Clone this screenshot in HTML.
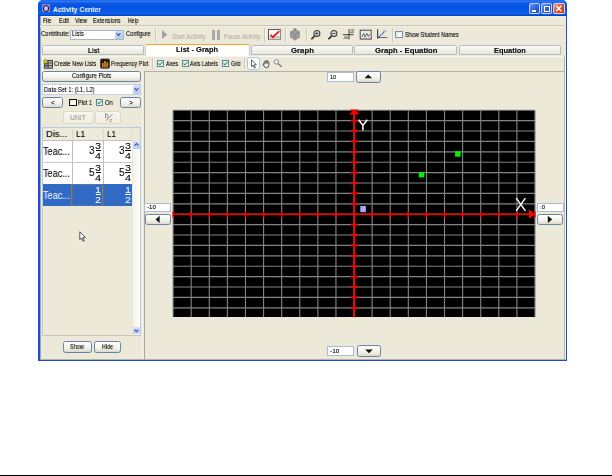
<!DOCTYPE html>
<html><head><meta charset="utf-8">
<style>
*{box-sizing:border-box;margin:0;padding:0}
html,body{width:612px;height:476px;background:#fff;overflow:hidden;font-family:"Liberation Sans",sans-serif;}
.a{position:absolute}
.t{position:absolute;white-space:nowrap;transform-origin:0 0;will-change:transform}
.btn{position:absolute;background:linear-gradient(#ffffff,#f3f2ea 60%,#dddacb);border:1px solid #6a84a8;border-radius:2.5px}
.dbtn{position:absolute;background:linear-gradient(#f7f6f0,#efede3);border:1px solid #dddaca;border-radius:2px}
.wb{position:absolute;top:3px;height:11px;border:1px solid rgba(232,238,252,0.8);border-radius:2px;background:linear-gradient(135deg,#6a98f4,#2a5bdc 60%,#2150c8)}
.sep{position:absolute;width:1px;background:#cbc8b6;box-shadow:1px 0 0 #f6f5ee}
.tab{position:absolute;top:45.1px;height:10.4px;background:linear-gradient(#fbfbf8,#f0eee4 60%,#e9e7da);border:1px solid #b3bcc6;border-radius:1.5px 1.5px 0 0}
.cb{position:absolute;width:7px;height:7px;background:linear-gradient(135deg,#e4e4dc,#fff 65%);border:1px solid #5f83ac}
.inp{position:absolute;background:#fff;border:1px solid #a9bdd6;}
</style></head><body>

<div class="a" style="left:38px;top:0;width:529px;height:360.9px;background:#1b4cd8;border-radius:5px 5px 0 0"></div>
<div class="a" style="left:38px;top:0;width:529px;height:15.9px;border-radius:5px 5px 0 0;background:linear-gradient(#1f62e2 0%,#2c76f2 9%,#0a5ae6 20%,#0553e0 35%,#0553e0 58%,#0a61ee 80%,#0b64f0 88%,#0444c6 97%,#0238b0 100%)"></div>
<div class="a" style="left:40.2px;top:15.9px;width:525.8px;height:343.9px;background:#ece9d8;border-left:1.4px solid #a9a89c;border-bottom:1px solid #b4b2a4"></div>
<div class="a" style="left:41.6px;top:4.2px;width:8.4px;height:8.3px;background:#8f8ad0;border-radius:0.8px"></div>
<div class="a" style="left:42.6px;top:5.1px;width:6.5px;height:6.5px;border-radius:50%;border:1.9px solid #0c1234;background:#c4bef0"></div>
<div class="t" style="left:52.60px;top:5.31px;font-size:7.9px;line-height:9.48px;transform:scaleX(0.8617);color:#fff;font-weight:bold;">Activity Center</div>
<div class="wb" style="left:529px;width:11px"></div><div class="a" style="left:531.5px;top:10px;width:4px;height:1.6px;background:#fff"></div>
<div class="wb" style="left:541px;width:11px"></div><div class="a" style="left:543.5px;top:5.5px;width:6px;height:6px;border:1px solid #fff;border-top-width:1.8px"></div>
<div class="wb" style="left:553px;width:11.5px;background:linear-gradient(135deg,#f09478,#d84a24 55%,#c23a18)"></div>
<svg class="a" style="left:553px;top:3px" width="12" height="11"><path d="M3.3 2.8 L8.4 8.2 M8.4 2.8 L3.3 8.2" stroke="#fff" stroke-width="1.5"/></svg>
<div class="t" style="left:43.00px;top:16.78px;font-size:6.7px;line-height:8.04px;transform:scaleX(0.7791);color:#0a0a0a;text-shadow:0 0 0.5px rgba(0,0,0,0.4);">File</div>
<div class="t" style="left:58.80px;top:16.78px;font-size:6.7px;line-height:8.04px;transform:scaleX(0.8585);color:#0a0a0a;text-shadow:0 0 0.5px rgba(0,0,0,0.4);">Edit</div>
<div class="t" style="left:75.00px;top:16.78px;font-size:6.7px;line-height:8.04px;transform:scaleX(0.8348);color:#0a0a0a;text-shadow:0 0 0.5px rgba(0,0,0,0.4);">View</div>
<div class="t" style="left:93.30px;top:16.78px;font-size:6.7px;line-height:8.04px;transform:scaleX(0.8466);color:#0a0a0a;text-shadow:0 0 0.5px rgba(0,0,0,0.4);">Extensions</div>
<div class="t" style="left:128.00px;top:16.78px;font-size:6.7px;line-height:8.04px;transform:scaleX(0.7628);color:#0a0a0a;text-shadow:0 0 0.5px rgba(0,0,0,0.4);">Help</div>
<div class="a" style="left:40.3px;top:25.3px;width:524px;height:1px;background:#c9c6b5"></div><div class="a" style="left:41.6px;top:15.9px;width:524.4px;height:1px;background:#f5f0dc"></div>
<div class="a" style="left:40.3px;top:26.4px;width:524px;height:1px;background:#f3f1e6"></div>
<div class="t" style="left:40.50px;top:30.48px;font-size:6.7px;line-height:8.04px;transform:scaleX(0.8772);color:#0a0a0a;text-shadow:0 0 0.5px rgba(0,0,0,0.4);">Contribute:</div>
<div class="inp" style="left:69.8px;top:29.5px;width:53.8px;height:10.4px;border-color:#a3b6ce"></div>
<div class="t" style="left:71.80px;top:30.48px;font-size:6.7px;line-height:8.04px;transform:scaleX(0.8572);color:#0a0a0a;text-shadow:0 0 0.5px rgba(0,0,0,0.4);">Lists</div>
<div class="a" style="left:115.2px;top:30.5px;width:7.4px;height:8.4px;background:linear-gradient(#cfdcfb,#b4c8f6);border-radius:1px"></div>
<svg class="a" style="left:115.4px;top:30.4px" width="7" height="9"><path d="M1.6 3.2 L3.5 5.6 L5.4 3.2" stroke="#3a5590" stroke-width="1.1" fill="none"/></svg>
<div class="t" style="left:126.20px;top:30.48px;font-size:6.7px;line-height:8.04px;transform:scaleX(0.8483);color:#0a0a0a;text-shadow:0 0 0.5px rgba(0,0,0,0.4);">Configure</div>
<div class="sep" style="left:155.3px;top:28px;height:14px"></div>
<svg class="a" style="left:161px;top:29px" width="8" height="11"><path d="M1 1 L6.3 5.6 L1 10.2 Z" fill="#a3a3a3"/></svg>
<div class="t" style="left:172.40px;top:32.50px;font-size:6.5px;line-height:7.80px;transform:scaleX(0.9339);color:#aaa796;">Start Activity</div>
<div class="a" style="left:212px;top:29.5px;width:2.8px;height:10.2px;background:#a9a9a9"></div><div class="a" style="left:216.8px;top:29.5px;width:2.8px;height:10.2px;background:#a9a9a9"></div>
<div class="t" style="left:223.60px;top:32.50px;font-size:6.5px;line-height:7.80px;transform:scaleX(0.8970);color:#aaa796;">Pause Activity</div>
<div class="sep" style="left:264.4px;top:28px;height:14px"></div>
<div class="a" style="left:268px;top:29.4px;width:13px;height:10.4px;background:linear-gradient(#fafafa 0%,#f4f4f4 62%,#c4c4c4 66%,#d4d4d4 100%);border:1px solid #5a5a5a;border-right-color:#8a8a8a;border-bottom-color:#9a9a9a"></div>
<svg class="a" style="left:268px;top:29.4px" width="13" height="11"><path d="M2.6 5.8 L4.8 8.2 L11.3 2.2" stroke="#e81010" stroke-width="1.7" fill="none"/></svg>
<div class="sep" style="left:285.4px;top:28px;height:14px"></div>
<svg class="a" style="left:289px;top:28px" width="12" height="13"><path d="M6 0.8 L11 3.8 L11 9.6 L6 12.5 L1 9.6 L1 3.8 Z" fill="#9c9c9c"/><path d="M6 6.6 L11 3.8 M6 6.6 L1 3.8 M6 6.6 L6 12.5" stroke="#848484" stroke-width="0.7"/><rect x="4.6" y="0.3" width="2.8" height="2.5" fill="#8c8c8c"/></svg>
<div class="sep" style="left:305.6px;top:28px;height:14px"></div>
<svg class="a" style="left:310px;top:29px" width="12" height="12"><circle cx="6.9" cy="4.5" r="3" fill="#d6d6d6" stroke="#3a3a3a" stroke-width="1.05"/><path d="M4.6 6.9 L1.4 10.3" stroke="#222" stroke-width="1.5"/><path d="M5.2 4.6 H8.4 M6.8 3 V6.2" stroke="#333" stroke-width="0.8"/></svg>
<svg class="a" style="left:326.5px;top:29px" width="12" height="12"><circle cx="6.9" cy="4.5" r="3" fill="#d6d6d6" stroke="#3a3a3a" stroke-width="1.05"/><path d="M4.6 6.9 L1.4 10.3" stroke="#222" stroke-width="1.5"/><path d="M5.2 4.6 H8.4 " stroke="#333" stroke-width="0.8"/></svg>
<svg class="a" style="left:342px;top:28px" width="14" height="13"><path d="M0.8 6.7 H11.6 M7 1.2 V11.4" stroke="#2a2a2a" stroke-width="0.9"/><text x="8" y="5.2" font-size="4.6" font-family="Liberation Sans" fill="#111" textLength="4" lengthAdjust="spacingAndGlyphs">10</text><text x="1.6" y="11" font-size="4.4" font-family="Liberation Sans" fill="#111" textLength="4.6" lengthAdjust="spacingAndGlyphs">40</text></svg>
<svg class="a" style="left:358.5px;top:29px" width="14" height="12"><rect x="1.2" y="1.2" width="11" height="8.8" fill="#ececea" stroke="#4a4a4a" stroke-width="1"/><path d="M1.2 10.4 H12.4" stroke="#888" stroke-width="0.8"/><path d="M3 8 L4.6 4.2 L6.2 8.2 L7.8 4.4 L9.4 7.6 L10.6 5" stroke="#444" stroke-width="0.8" fill="none"/></svg>
<svg class="a" style="left:376px;top:28px" width="13" height="13"><path d="M1.7 1.2 V10.8" stroke="#2a2a2a" stroke-width="1"/><path d="M1 9.5 H11.2" stroke="#555" stroke-width="0.9"/><path d="M2.6 9 L4.4 7.2 L6.2 6.2 L7.6 4.2 L9.6 2.6" stroke="#2a48d8" stroke-width="1.2" fill="none" stroke-dasharray="1.4 0.7"/></svg>
<div class="sep" style="left:392px;top:28px;height:14px"></div>
<div class="cb" style="left:395.2px;top:31.2px;width:7.5px;height:7.2px;border-color:#7890b0;background:linear-gradient(135deg,#dcdcd4,#fff 70%)"></div>
<div class="t" style="left:404.60px;top:30.90px;font-size:6.5px;line-height:7.80px;transform:scaleX(0.8557);color:#0a0a0a;text-shadow:0 0 0.5px rgba(0,0,0,0.4);">Show Student Names</div>

<div class="tab" style="left:41.8px;width:102.6px"></div>
<div class="t" style="left:88.00px;top:46.58px;font-size:7.2px;line-height:8.64px;transform:scaleX(0.8841);color:#111;text-shadow:0 0 0.5px rgba(0,0,0,0.4);font-weight:bold;">List</div>
<div class="tab" style="left:251px;width:102px"></div>
<div class="t" style="left:290.60px;top:46.58px;font-size:7.2px;line-height:8.64px;transform:scaleX(1.0863);color:#111;text-shadow:0 0 0.5px rgba(0,0,0,0.4);font-weight:bold;">Graph</div>
<div class="tab" style="left:354.4px;width:102.4px"></div>
<div class="t" style="left:374.50px;top:46.58px;font-size:7.2px;line-height:8.64px;transform:scaleX(1.0721);color:#111;text-shadow:0 0 0.5px rgba(0,0,0,0.4);font-weight:bold;">Graph - Equation</div>
<div class="tab" style="left:458.6px;width:102.8px"></div>
<div class="t" style="left:494.00px;top:46.58px;font-size:7.2px;line-height:8.64px;transform:scaleX(1.0374);color:#111;text-shadow:0 0 0.5px rgba(0,0,0,0.4);font-weight:bold;">Equation</div>
<div class="tab" style="left:144.8px;top:43.9px;width:105.6px;height:12.8px;background:#fefefd;border:1px solid #c4c8cc;border-bottom:none;border-top:1.4px solid #f2a32a"></div>
<div class="t" style="left:175.80px;top:45.88px;font-size:7.2px;line-height:8.64px;transform:scaleX(1.0460);color:#111;text-shadow:0 0 0.5px rgba(0,0,0,0.4);font-weight:bold;">List - Graph</div>
<div class="a" style="left:41.6px;top:55.9px;width:522.4px;height:1px;background:#f7f6f0"></div>
<svg class="a" style="left:43px;top:57.5px" width="10" height="11"><rect x="1.4" y="2.4" width="8" height="7.8" fill="#b9b9b9" stroke="#2a2a2a" stroke-width="0.9"/><rect x="1.9" y="2.9" width="3" height="6.8" fill="#8a8a8a"/><path d="M5.2 2.4 V10.2 M1.4 5 H9.4 M1.4 7.6 H9.4" stroke="#2a2a2a" stroke-width="0.7"/><path d="M2.5 0.9 L3.3 2.4 L4.9 2.7 L3.7 3.9 L4 5.5 L2.5 4.7 L1 5.5 L1.3 3.9 L0.1 2.7 L1.7 2.4 Z" fill="#f4e818" stroke="#6a6208" stroke-width="0.4"/></svg>
<div class="t" style="left:54.20px;top:59.74px;font-size:6.6px;line-height:7.92px;transform:scaleX(0.8403);color:#0a0a0a;text-shadow:0 0 0.5px rgba(0,0,0,0.4);">Create New Lists</div>
<svg class="a" style="left:99.8px;top:57.8px" width="10" height="11"><rect x="0.6" y="1" width="8.8" height="9.2" rx="1" fill="#2c1a08" stroke="#111" stroke-width="0.6"/><rect x="2" y="5" width="1.6" height="4.6" fill="#d08a2c"/><rect x="4.2" y="3" width="1.6" height="6.6" fill="#d08a2c"/><rect x="6.4" y="4.4" width="1.6" height="5.2" fill="#d08a2c"/></svg>
<div class="t" style="left:110.90px;top:59.74px;font-size:6.6px;line-height:7.92px;transform:scaleX(0.8409);color:#0a0a0a;text-shadow:0 0 0.5px rgba(0,0,0,0.4);">Frequency Plot</div>
<div class="sep" style="left:152.2px;top:58px;height:11px"></div>
<div class="cb" style="left:157.3px;top:60px"></div><svg class="a" style="left:157.3px;top:60px" width="7" height="7"><path d="M1.6 3.4 L3 5 L5.5 1.9" stroke="#21a121" stroke-width="1.1" fill="none"/></svg>
<div class="t" style="left:165.60px;top:59.74px;font-size:6.6px;line-height:7.92px;transform:scaleX(0.8315);color:#0a0a0a;text-shadow:0 0 0.5px rgba(0,0,0,0.4);">Axes</div>
<div class="cb" style="left:181.6px;top:60px"></div><svg class="a" style="left:181.6px;top:60px" width="7" height="7"><path d="M1.6 3.4 L3 5 L5.5 1.9" stroke="#21a121" stroke-width="1.1" fill="none"/></svg>
<div class="t" style="left:190.10px;top:59.74px;font-size:6.6px;line-height:7.92px;transform:scaleX(0.8270);color:#0a0a0a;text-shadow:0 0 0.5px rgba(0,0,0,0.4);">Axis Labels</div>
<div class="cb" style="left:222px;top:60px"></div><svg class="a" style="left:222px;top:60px" width="7" height="7"><path d="M1.6 3.4 L3 5 L5.5 1.9" stroke="#21a121" stroke-width="1.1" fill="none"/></svg>
<div class="t" style="left:231.40px;top:59.74px;font-size:6.6px;line-height:7.92px;transform:scaleX(0.7779);color:#0a0a0a;text-shadow:0 0 0.5px rgba(0,0,0,0.4);">Grid</div>
<div class="sep" style="left:244.2px;top:58px;height:11px"></div>
<div class="a" style="left:247.4px;top:57.4px;width:12.6px;height:12.3px;background:#fdfdfc;border:1.2px solid #aec2da;border-radius:2.5px"></div>
<svg class="a" style="left:250.2px;top:58.6px" width="8" height="10"><path d="M1.5 0.8 L1.5 7.6 L3.1 6.2 L4.3 9 L5.3 8.5 L4.2 5.8 L6.3 5.6 Z" fill="#fff" stroke="#222" stroke-width="0.7"/></svg>
<svg class="a" style="left:261.8px;top:58.6px" width="9" height="10"><path d="M2.2 5.4 V3 Q2.8 2.2 3.3 3 V2 Q3.9 1.2 4.5 2 V1.8 Q5.1 1 5.7 1.9 V2.8 Q6.3 2.2 6.8 3 V6.4 Q6.6 8.6 4.6 8.8 Q2.8 8.8 1.8 6.8 L0.9 5.2 Q1.4 4.4 2.2 5.4 Z" fill="#f4f4f0" stroke="#2a2a2a" stroke-width="0.8"/><path d="M3.3 3 V5 M4.5 2 V5 M5.7 2.6 V5" stroke="#2a2a2a" stroke-width="0.5"/></svg>
<svg class="a" style="left:273px;top:58.2px" width="10" height="10"><circle cx="3.4" cy="3.9" r="2.2" fill="#f4f4f2" stroke="#7c7c7c" stroke-width="0.9"/><path d="M5.1 5.6 L8.6 8.7" stroke="#6c6c6c" stroke-width="1.2"/></svg>
<div class="a" style="left:143.8px;top:70.6px;width:421px;height:1px;background:#b4b2a4"></div>
<div class="a" style="left:143.8px;top:70.5px;width:1px;height:288.5px;background:#a9a79a"></div>
<div class="a" style="left:141.8px;top:70.5px;width:1.2px;height:288.5px;background:#f7f6ef"></div>
<div class="a" style="left:563.9px;top:56px;width:1px;height:303px;background:#b9b7a8"></div><div class="a" style="left:564.9px;top:56px;width:1.1px;height:303px;background:#f6f5ee"></div>
<div class="btn" style="left:42.1px;top:71.3px;width:98.7px;height:10.4px"></div>
<div class="t" style="left:72.30px;top:72.24px;font-size:6.6px;line-height:7.92px;transform:scaleX(0.8693);color:#0a0a0a;text-shadow:0 0 0.5px rgba(0,0,0,0.4);">Configure Plots</div>
<div class="inp" style="left:42.1px;top:84.2px;width:98.8px;height:10.8px;border-color:#c3d0e2"></div>
<div class="t" style="left:43.50px;top:85.64px;font-size:6.6px;line-height:7.92px;transform:scaleX(0.8810);color:#0a0a0a;text-shadow:0 0 0.5px rgba(0,0,0,0.4);">Data Set 1: (L1, L2)</div>
<div class="a" style="left:133px;top:85.4px;width:7px;height:8.4px;background:linear-gradient(#d2defb,#b8cbf6);border-radius:1px"></div><svg class="a" style="left:133px;top:85.4px" width="7" height="9"><path d="M1.7 3.2 L3.5 5.4 L5.3 3.2" stroke="#3a5590" stroke-width="1.1" fill="none"/></svg>
<div class="btn" style="left:42.2px;top:97.3px;width:21.2px;height:10.9px"></div>
<div class="t" style="left:51.00px;top:98.68px;font-size:6.7px;line-height:8.04px;transform:scaleX(1.0240);color:#0a0a0a;text-shadow:0 0 0.5px rgba(0,0,0,0.4);">&lt;</div>
<div class="btn" style="left:120.2px;top:97.3px;width:20.6px;height:10.9px"></div>
<div class="t" style="left:128.50px;top:98.68px;font-size:6.7px;line-height:8.04px;transform:scaleX(1.0240);color:#0a0a0a;text-shadow:0 0 0.5px rgba(0,0,0,0.4);">&gt;</div>
<div class="cb" style="left:69px;top:99px;border:1.5px solid #111;width:7.5px;height:7.3px"></div>
<div class="t" style="left:77.60px;top:98.64px;font-size:6.6px;line-height:7.92px;transform:scaleX(0.8237);color:#0a0a0a;text-shadow:0 0 0.5px rgba(0,0,0,0.4);">Plot 1</div>
<div class="cb" style="left:95.8px;top:99px"></div><svg class="a" style="left:95.8px;top:99px" width="7" height="7"><path d="M1.6 3.4 L3 5 L5.5 1.9" stroke="#21a121" stroke-width="1.1" fill="none"/></svg>
<div class="t" style="left:105.00px;top:98.64px;font-size:6.6px;line-height:7.92px;transform:scaleX(0.8526);color:#0a0a0a;text-shadow:0 0 0.5px rgba(0,0,0,0.4);">On</div>
<div class="dbtn" style="left:62.5px;top:111.2px;width:31px;height:12.4px"></div>
<div class="t" style="left:69.80px;top:112.82px;font-size:7.8px;line-height:9.36px;transform:scaleX(0.8625);color:#8e8b7d;">UNIT</div>
<div class="dbtn" style="left:95.4px;top:111.2px;width:26px;height:12.4px"></div>
<svg class="a" style="left:103px;top:112px" width="12" height="11"><path d="M2.8 8.8 L9.6 2.2" stroke="#6f6d62" stroke-width="0.8"/><text x="1.7" y="6.3" font-size="7" font-family="Liberation Sans" fill="#6f6d62">b</text><text x="6.6" y="9.6" font-size="5.2" font-family="Liberation Sans" fill="#6f6d62">c</text></svg>
<div class="a" style="left:42.3px;top:126.6px;width:98.6px;height:209px;border:1px solid #b9cbe2;border-bottom:1px solid #c8c5b4"></div>
<div class="a" style="left:43.3px;top:127.6px;width:89px;height:13px;background:#ebeadb;border-bottom:1px solid #c5c2b0"></div>
<div class="a" style="left:71.5px;top:129px;width:1px;height:10px;background:#dcd9c9"></div>
<div class="a" style="left:102.5px;top:129px;width:1px;height:10px;background:#dcd9c9"></div>
<div class="a" style="left:131px;top:129px;width:1px;height:10px;background:#dcd9c9"></div>
<div class="t" style="left:45.80px;top:128.14px;font-size:9.6px;line-height:11.52px;transform:scaleX(0.9790);color:#111;text-shadow:0 0 0.5px rgba(0,0,0,0.4);">Dis...</div>
<div class="t" style="left:76.00px;top:128.14px;font-size:9.6px;line-height:11.52px;transform:scaleX(0.8621);color:#111;text-shadow:0 0 0.5px rgba(0,0,0,0.4);">L1</div>
<div class="t" style="left:106.50px;top:128.14px;font-size:9.6px;line-height:11.52px;transform:scaleX(0.8433);color:#111;text-shadow:0 0 0.5px rgba(0,0,0,0.4);">L1</div>
<div class="a" style="left:43.3px;top:140.6px;width:88.7px;height:21.9px;background:#fff"></div>
<div class="a" style="left:43.3px;top:161.7px;width:88.7px;height:1px;background:#c8c8c8"></div>
<div class="a" style="left:71.5px;top:140.6px;width:1px;height:21.9px;background:#c0c0c0"></div>
<div class="a" style="left:102.5px;top:140.6px;width:1px;height:21.9px;background:#c0c0c0"></div>
<div class="t" style="left:43.20px;top:145.78px;font-size:10.2px;line-height:12.24px;transform:scaleX(0.8995);color:#111;text-shadow:0 0 0.5px rgba(0,0,0,0.4);">Teac...</div>
<div class="t" style="left:88.90px;top:144.88px;font-size:10.2px;line-height:12.24px;transform:scaleX(0.9697);color:#111;text-shadow:0 0 0.5px rgba(0,0,0,0.4);">3</div>
<div class="t" style="left:95.30px;top:140.98px;font-size:9.2px;line-height:11.04px;transform:scaleX(1.1707);color:#111;text-shadow:0 0 0.5px rgba(0,0,0,0.4);">3</div>
<div class="a" style="left:95.6px;top:150.3px;width:5.9px;height:1px;background:#111"></div>
<div class="t" style="left:95.30px;top:151.18px;font-size:9.2px;line-height:11.04px;transform:scaleX(1.1707);color:#111;text-shadow:0 0 0.5px rgba(0,0,0,0.4);">4</div>
<div class="t" style="left:118.60px;top:144.88px;font-size:10.2px;line-height:12.24px;transform:scaleX(0.9697);color:#111;text-shadow:0 0 0.5px rgba(0,0,0,0.4);">3</div>
<div class="t" style="left:125.00px;top:140.98px;font-size:9.2px;line-height:11.04px;transform:scaleX(1.1707);color:#111;text-shadow:0 0 0.5px rgba(0,0,0,0.4);">3</div>
<div class="a" style="left:125.3px;top:150.3px;width:5.9px;height:1px;background:#111"></div>
<div class="t" style="left:125.00px;top:151.18px;font-size:9.2px;line-height:11.04px;transform:scaleX(1.1707);color:#111;text-shadow:0 0 0.5px rgba(0,0,0,0.4);">4</div>
<div class="a" style="left:43.3px;top:162.5px;width:88.7px;height:21.9px;background:#fff"></div>
<div class="a" style="left:43.3px;top:183.6px;width:88.7px;height:1px;background:#c8c8c8"></div>
<div class="a" style="left:71.5px;top:162.5px;width:1px;height:21.9px;background:#c0c0c0"></div>
<div class="a" style="left:102.5px;top:162.5px;width:1px;height:21.9px;background:#c0c0c0"></div>
<div class="t" style="left:43.20px;top:167.68px;font-size:10.2px;line-height:12.24px;transform:scaleX(0.8995);color:#111;text-shadow:0 0 0.5px rgba(0,0,0,0.4);">Teac...</div>
<div class="t" style="left:88.90px;top:166.78px;font-size:10.2px;line-height:12.24px;transform:scaleX(0.9697);color:#111;text-shadow:0 0 0.5px rgba(0,0,0,0.4);">5</div>
<div class="t" style="left:95.30px;top:162.88px;font-size:9.2px;line-height:11.04px;transform:scaleX(1.1707);color:#111;text-shadow:0 0 0.5px rgba(0,0,0,0.4);">3</div>
<div class="a" style="left:95.6px;top:172.2px;width:5.9px;height:1px;background:#111"></div>
<div class="t" style="left:95.30px;top:173.08px;font-size:9.2px;line-height:11.04px;transform:scaleX(1.1707);color:#111;text-shadow:0 0 0.5px rgba(0,0,0,0.4);">4</div>
<div class="t" style="left:118.60px;top:166.78px;font-size:10.2px;line-height:12.24px;transform:scaleX(0.9697);color:#111;text-shadow:0 0 0.5px rgba(0,0,0,0.4);">5</div>
<div class="t" style="left:125.00px;top:162.88px;font-size:9.2px;line-height:11.04px;transform:scaleX(1.1707);color:#111;text-shadow:0 0 0.5px rgba(0,0,0,0.4);">3</div>
<div class="a" style="left:125.3px;top:172.2px;width:5.9px;height:1px;background:#111"></div>
<div class="t" style="left:125.00px;top:173.08px;font-size:9.2px;line-height:11.04px;transform:scaleX(1.1707);color:#111;text-shadow:0 0 0.5px rgba(0,0,0,0.4);">4</div>
<div class="a" style="left:43.3px;top:184.4px;width:88.7px;height:21.4px;background:#316ac5"></div>
<div class="a" style="left:43.3px;top:205.0px;width:88.7px;height:1px;background:#316ac5"></div>
<div class="a" style="left:71.5px;top:184.4px;width:1px;height:21.4px;background:#6a6a6a"></div>
<div class="a" style="left:102.5px;top:184.4px;width:1px;height:21.4px;background:#6a6a6a"></div>
<div class="t" style="left:43.20px;top:189.58px;font-size:10.2px;line-height:12.24px;transform:scaleX(0.8995);color:#fff;">Teac...</div>
<div class="t" style="left:95.30px;top:184.78px;font-size:9.2px;line-height:11.04px;transform:scaleX(1.1707);color:#fff;">1</div>
<div class="a" style="left:95.6px;top:194.1px;width:5.9px;height:1px;background:#fff"></div>
<div class="t" style="left:95.30px;top:194.98px;font-size:9.2px;line-height:11.04px;transform:scaleX(1.1707);color:#fff;">2</div>
<div class="t" style="left:125.00px;top:184.78px;font-size:9.2px;line-height:11.04px;transform:scaleX(1.1707);color:#fff;">1</div>
<div class="a" style="left:125.3px;top:194.1px;width:5.9px;height:1px;background:#fff"></div>
<div class="t" style="left:125.00px;top:194.98px;font-size:9.2px;line-height:11.04px;transform:scaleX(1.1707);color:#fff;">2</div>
<div class="a" style="left:71.4px;top:184.4px;width:31.4px;height:21.6px;border:1px solid rgba(133,131,111,0.75);border-top-color:rgba(133,131,111,0.45);border-bottom-color:rgba(133,131,111,0.3)"></div>
<div class="a" style="left:132.6px;top:140.6px;width:7.4px;height:194px;background:linear-gradient(90deg,#f3f1ea,#fefefb)"></div>
<div class="a" style="left:133px;top:141.4px;width:6.6px;height:7.4px;background:linear-gradient(#d6e0fc,#b9ccf7);border-radius:1px"></div>
<svg class="a" style="left:133px;top:141.4px" width="7" height="7"><path d="M1.6 4.6 L3.5 2.6 L5.4 4.6" stroke="#3a5590" stroke-width="1.1" fill="none"/></svg>
<div class="a" style="left:133px;top:327px;width:6.6px;height:7.4px;background:linear-gradient(#d6e0fc,#b9ccf7);border-radius:1px"></div>
<svg class="a" style="left:133px;top:327px" width="7" height="7"><path d="M1.6 2.6 L3.5 4.6 L5.4 2.6" stroke="#3a5590" stroke-width="1.1" fill="none"/></svg>
<div class="btn" style="left:63.2px;top:341.2px;width:29.2px;height:11.6px"></div>
<div class="t" style="left:70.30px;top:343.24px;font-size:6.6px;line-height:7.92px;transform:scaleX(0.8424);color:#0a0a0a;text-shadow:0 0 0.5px rgba(0,0,0,0.4);">Show</div>
<div class="btn" style="left:94px;top:341.2px;width:26.8px;height:11.6px"></div>
<div class="t" style="left:101.90px;top:343.24px;font-size:6.6px;line-height:7.92px;transform:scaleX(0.8111);color:#0a0a0a;text-shadow:0 0 0.5px rgba(0,0,0,0.4);">Hide</div>
<svg class="a" style="left:78.6px;top:230.6px" width="8" height="12"><path d="M0.8 0.8 L0.8 8.6 L2.6 7 L4 10.2 L5.2 9.7 L3.9 6.6 L6.3 6.4 Z" fill="#fff" stroke="#111" stroke-width="0.7"/></svg>
<div class="a" style="left:173.1px;top:110.2px;width:361.9px;height:207.0px;background:#000"></div>
<svg class="a" style="left:0;top:0" width="612" height="476"><line x1="173.10" y1="110.2" x2="173.10" y2="317.2" stroke="#858585" stroke-width="1.1"/><line x1="191.19" y1="110.2" x2="191.19" y2="317.2" stroke="#858585" stroke-width="1.1"/><line x1="209.29" y1="110.2" x2="209.29" y2="317.2" stroke="#858585" stroke-width="1.1"/><line x1="227.38" y1="110.2" x2="227.38" y2="317.2" stroke="#858585" stroke-width="1.1"/><line x1="245.48" y1="110.2" x2="245.48" y2="317.2" stroke="#858585" stroke-width="1.1"/><line x1="263.57" y1="110.2" x2="263.57" y2="317.2" stroke="#858585" stroke-width="1.1"/><line x1="281.67" y1="110.2" x2="281.67" y2="317.2" stroke="#858585" stroke-width="1.1"/><line x1="299.76" y1="110.2" x2="299.76" y2="317.2" stroke="#858585" stroke-width="1.1"/><line x1="317.86" y1="110.2" x2="317.86" y2="317.2" stroke="#858585" stroke-width="1.1"/><line x1="335.95" y1="110.2" x2="335.95" y2="317.2" stroke="#858585" stroke-width="1.1"/><line x1="354.05" y1="110.2" x2="354.05" y2="317.2" stroke="#858585" stroke-width="1.1"/><line x1="372.14" y1="110.2" x2="372.14" y2="317.2" stroke="#858585" stroke-width="1.1"/><line x1="390.24" y1="110.2" x2="390.24" y2="317.2" stroke="#858585" stroke-width="1.1"/><line x1="408.33" y1="110.2" x2="408.33" y2="317.2" stroke="#858585" stroke-width="1.1"/><line x1="426.43" y1="110.2" x2="426.43" y2="317.2" stroke="#858585" stroke-width="1.1"/><line x1="444.52" y1="110.2" x2="444.52" y2="317.2" stroke="#858585" stroke-width="1.1"/><line x1="462.62" y1="110.2" x2="462.62" y2="317.2" stroke="#858585" stroke-width="1.1"/><line x1="480.72" y1="110.2" x2="480.72" y2="317.2" stroke="#858585" stroke-width="1.1"/><line x1="498.81" y1="110.2" x2="498.81" y2="317.2" stroke="#858585" stroke-width="1.1"/><line x1="516.90" y1="110.2" x2="516.90" y2="317.2" stroke="#858585" stroke-width="1.1"/><line x1="535.00" y1="110.2" x2="535.00" y2="317.2" stroke="#858585" stroke-width="1.1"/><line x1="173.1" y1="110.20" x2="535" y2="110.20" stroke="#838383" stroke-width="1.15"/><line x1="173.1" y1="120.60" x2="535" y2="120.60" stroke="#838383" stroke-width="1.15"/><line x1="173.1" y1="131.00" x2="535" y2="131.00" stroke="#838383" stroke-width="1.15"/><line x1="173.1" y1="141.40" x2="535" y2="141.40" stroke="#838383" stroke-width="1.15"/><line x1="173.1" y1="151.80" x2="535" y2="151.80" stroke="#838383" stroke-width="1.15"/><line x1="173.1" y1="162.20" x2="535" y2="162.20" stroke="#838383" stroke-width="1.15"/><line x1="173.1" y1="172.60" x2="535" y2="172.60" stroke="#838383" stroke-width="1.15"/><line x1="173.1" y1="183.00" x2="535" y2="183.00" stroke="#838383" stroke-width="1.15"/><line x1="173.1" y1="193.40" x2="535" y2="193.40" stroke="#838383" stroke-width="1.15"/><line x1="173.1" y1="203.80" x2="535" y2="203.80" stroke="#838383" stroke-width="1.15"/><line x1="173.1" y1="214.20" x2="535" y2="214.20" stroke="#838383" stroke-width="1.15"/><line x1="173.1" y1="224.60" x2="535" y2="224.60" stroke="#838383" stroke-width="1.15"/><line x1="173.1" y1="235.00" x2="535" y2="235.00" stroke="#838383" stroke-width="1.15"/><line x1="173.1" y1="245.40" x2="535" y2="245.40" stroke="#838383" stroke-width="1.15"/><line x1="173.1" y1="255.80" x2="535" y2="255.80" stroke="#838383" stroke-width="1.15"/><line x1="173.1" y1="266.20" x2="535" y2="266.20" stroke="#838383" stroke-width="1.15"/><line x1="173.1" y1="276.60" x2="535" y2="276.60" stroke="#838383" stroke-width="1.15"/><line x1="173.1" y1="287.00" x2="535" y2="287.00" stroke="#838383" stroke-width="1.15"/><line x1="173.1" y1="297.40" x2="535" y2="297.40" stroke="#838383" stroke-width="1.15"/><line x1="173.1" y1="307.80" x2="535" y2="307.80" stroke="#838383" stroke-width="1.15"/><line x1="173.1" y1="214.20" x2="533" y2="214.20" stroke="#ff0000" stroke-width="1.6"/><line x1="354.25" y1="112.2" x2="354.25" y2="317.2" stroke="#ff0000" stroke-width="1.7"/><line x1="173.10" y1="211.60" x2="173.10" y2="217.40" stroke="#ff0000" stroke-width="1.5"/><line x1="350.45" y1="110.20" x2="358.25" y2="110.20" stroke="#ff0000" stroke-width="1.5"/><line x1="191.19" y1="211.60" x2="191.19" y2="217.40" stroke="#ff0000" stroke-width="1.5"/><line x1="350.45" y1="120.60" x2="358.25" y2="120.60" stroke="#ff0000" stroke-width="1.5"/><line x1="209.29" y1="211.60" x2="209.29" y2="217.40" stroke="#ff0000" stroke-width="1.5"/><line x1="350.45" y1="131.00" x2="358.25" y2="131.00" stroke="#ff0000" stroke-width="1.5"/><line x1="227.38" y1="211.60" x2="227.38" y2="217.40" stroke="#ff0000" stroke-width="1.5"/><line x1="350.45" y1="141.40" x2="358.25" y2="141.40" stroke="#ff0000" stroke-width="1.5"/><line x1="245.48" y1="211.60" x2="245.48" y2="217.40" stroke="#ff0000" stroke-width="1.5"/><line x1="350.45" y1="151.80" x2="358.25" y2="151.80" stroke="#ff0000" stroke-width="1.5"/><line x1="263.57" y1="211.60" x2="263.57" y2="217.40" stroke="#ff0000" stroke-width="1.5"/><line x1="350.45" y1="162.20" x2="358.25" y2="162.20" stroke="#ff0000" stroke-width="1.5"/><line x1="281.67" y1="211.60" x2="281.67" y2="217.40" stroke="#ff0000" stroke-width="1.5"/><line x1="350.45" y1="172.60" x2="358.25" y2="172.60" stroke="#ff0000" stroke-width="1.5"/><line x1="299.76" y1="211.60" x2="299.76" y2="217.40" stroke="#ff0000" stroke-width="1.5"/><line x1="350.45" y1="183.00" x2="358.25" y2="183.00" stroke="#ff0000" stroke-width="1.5"/><line x1="317.86" y1="211.60" x2="317.86" y2="217.40" stroke="#ff0000" stroke-width="1.5"/><line x1="350.45" y1="193.40" x2="358.25" y2="193.40" stroke="#ff0000" stroke-width="1.5"/><line x1="335.95" y1="211.60" x2="335.95" y2="217.40" stroke="#ff0000" stroke-width="1.5"/><line x1="350.45" y1="203.80" x2="358.25" y2="203.80" stroke="#ff0000" stroke-width="1.5"/><line x1="372.14" y1="211.60" x2="372.14" y2="217.40" stroke="#ff0000" stroke-width="1.5"/><line x1="350.45" y1="224.60" x2="358.25" y2="224.60" stroke="#ff0000" stroke-width="1.5"/><line x1="390.24" y1="211.60" x2="390.24" y2="217.40" stroke="#ff0000" stroke-width="1.5"/><line x1="350.45" y1="235.00" x2="358.25" y2="235.00" stroke="#ff0000" stroke-width="1.5"/><line x1="408.33" y1="211.60" x2="408.33" y2="217.40" stroke="#ff0000" stroke-width="1.5"/><line x1="350.45" y1="245.40" x2="358.25" y2="245.40" stroke="#ff0000" stroke-width="1.5"/><line x1="426.43" y1="211.60" x2="426.43" y2="217.40" stroke="#ff0000" stroke-width="1.5"/><line x1="350.45" y1="255.80" x2="358.25" y2="255.80" stroke="#ff0000" stroke-width="1.5"/><line x1="444.52" y1="211.60" x2="444.52" y2="217.40" stroke="#ff0000" stroke-width="1.5"/><line x1="350.45" y1="266.20" x2="358.25" y2="266.20" stroke="#ff0000" stroke-width="1.5"/><line x1="462.62" y1="211.60" x2="462.62" y2="217.40" stroke="#ff0000" stroke-width="1.5"/><line x1="350.45" y1="276.60" x2="358.25" y2="276.60" stroke="#ff0000" stroke-width="1.5"/><line x1="480.72" y1="211.60" x2="480.72" y2="217.40" stroke="#ff0000" stroke-width="1.5"/><line x1="350.45" y1="287.00" x2="358.25" y2="287.00" stroke="#ff0000" stroke-width="1.5"/><line x1="498.81" y1="211.60" x2="498.81" y2="217.40" stroke="#ff0000" stroke-width="1.5"/><line x1="350.45" y1="297.40" x2="358.25" y2="297.40" stroke="#ff0000" stroke-width="1.5"/><line x1="516.90" y1="211.60" x2="516.90" y2="217.40" stroke="#ff0000" stroke-width="1.5"/><line x1="350.45" y1="307.80" x2="358.25" y2="307.80" stroke="#ff0000" stroke-width="1.5"/><line x1="535.00" y1="211.60" x2="535.00" y2="217.40" stroke="#ff0000" stroke-width="1.5"/><path d="M535 214.20 L529 209.50 L529 218.80 Z" fill="#ff0000"/><path d="M354.35 109.7 L349.05 114.4 L359.65 114.4 Z" fill="#ff0000"/><path d="M516.2 198.2 L525.4 210.8 M525.4 198.2 L516.2 210.8" stroke="#fff" stroke-width="1.4" fill="none"/><path d="M358.6 119.8 L362.9 125.4 L367.3 119.8 M362.9 125.4 V130.6" stroke="#fff" stroke-width="1.5" fill="none"/><rect x="455.1" y="151.3" width="5.5" height="5.4" fill="#00f400"/><rect x="418.8" y="172" width="5.5" height="5.4" fill="#00f400"/><rect x="360.3" y="206" width="5.6" height="6.2" fill="#a6a6fa"/></svg>
<div class="inp" style="left:327px;top:72.3px;width:27px;height:9.4px"></div>
<div class="t" style="left:330.00px;top:73.64px;font-size:5.6px;line-height:6.72px;transform:scaleX(0.9945);color:#0a0a0a;text-shadow:0 0 0.5px rgba(0,0,0,0.4);">10</div>
<div class="btn" style="left:356.3px;top:71.4px;width:24.5px;height:11.2px"></div><svg class="a" style="left:356.3px;top:71.4px" width="25" height="11"><path d="M8.5 7.2 L12.2 3.4 L16 7.2 Z" fill="#111"/></svg>
<div class="inp" style="left:327.2px;top:346.1px;width:26.8px;height:10.2px"></div>
<div class="t" style="left:329.60px;top:347.94px;font-size:5.6px;line-height:6.72px;transform:scaleX(1.1614);color:#0a0a0a;text-shadow:0 0 0.5px rgba(0,0,0,0.4);">-10</div>
<div class="btn" style="left:356.5px;top:345.3px;width:24.3px;height:12px"></div><svg class="a" style="left:356.5px;top:345.3px" width="25" height="12"><path d="M8.2 4.4 L15.8 4.4 L12 8.2 Z" fill="#111"/></svg>
<div class="inp" style="left:144.4px;top:202.5px;width:27px;height:9.6px"></div>
<div class="t" style="left:147.20px;top:203.84px;font-size:5.6px;line-height:6.72px;transform:scaleX(1.1120);color:#0a0a0a;text-shadow:0 0 0.5px rgba(0,0,0,0.4);">-10</div>
<div class="btn" style="left:145.2px;top:214.3px;width:25.4px;height:10.8px"></div><svg class="a" style="left:145.2px;top:214.3px" width="25" height="11"><path d="M10.5 5.4 L14.6 1.8 L14.6 9 Z" fill="#111"/></svg>
<div class="inp" style="left:536.7px;top:202.8px;width:27px;height:9px"></div>
<div class="t" style="left:540.00px;top:203.84px;font-size:5.6px;line-height:6.72px;transform:scaleX(1.0702);color:#0a0a0a;text-shadow:0 0 0.5px rgba(0,0,0,0.4);">:0</div>
<div class="btn" style="left:537px;top:214.3px;width:26.3px;height:10.8px"></div><svg class="a" style="left:537px;top:214.3px" width="26" height="11"><path d="M15.2 5.4 L10.8 1.8 L10.8 9 Z" fill="#111"/></svg>
<div class="a" style="left:0;top:475px;width:612px;height:1px;background:#000"></div>
</body></html>
